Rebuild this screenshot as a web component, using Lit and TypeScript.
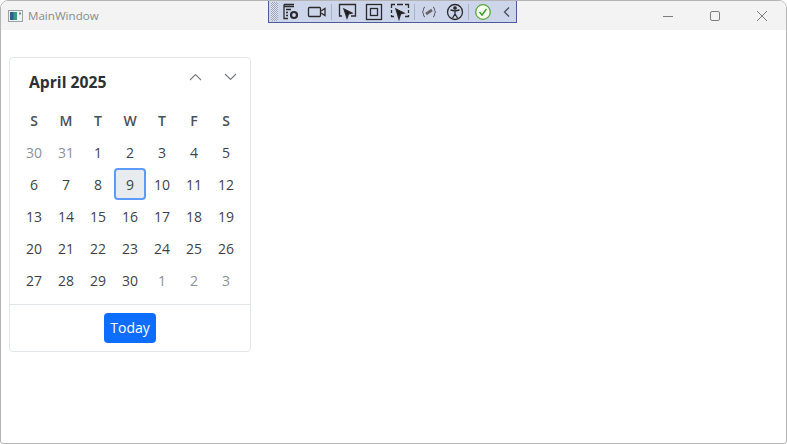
import { LitElement, html, css } from "lit";
import { customElement } from "lit/decorators.js";

const HEAD = ["S", "M", "T", "W", "T", "F", "S"];
const DAYS: [number, boolean][] = [
  [30, true], [31, true],
  ...Array.from({ length: 30 }, (_, i) => [i + 1, false] as [number, boolean]),
  [1, true], [2, true], [3, true],
];

@customElement("app-root")
export class AppRoot extends LitElement {
  static styles = css`
    :host { display: block; width: 787px; height: 444px; font-family: "Open Sans", "Noto Sans", sans-serif; background: #fff; overflow: hidden; }
    .window { position: relative; box-sizing: border-box; height: 444px; border: 1px solid #b4b4b4; border-radius: 8px 8px 3px 3px; background: #fff; overflow: hidden; display: flex; flex-direction: column; }
    .titlebar { height: 29px; flex: none; background: #f3f3f3; display: flex; align-items: center; padding-left: 7px; }
    .title { font-size: 11.6px; color: #8a8a8a; margin-left: 5px; }
    .app-icon { width: 15px; height: 12px; }
    .controls { margin-left: auto; margin-right: 1px; display: flex; }
    .ctl { width: 47px; height: 29px; display: flex; align-items: center; justify-content: center; }
    .ctl svg { width: 12px; height: 12px; stroke: #7d7d7d; fill: none; stroke-width: 1; }
    .content { padding: 27px 8px; }
    .card { box-sizing: border-box; width: 242px; height: 295px; border: 1px solid #e3e6e8; border-radius: 4px; display: flex; flex-direction: column; color: #343a40; }
    .head { height: 46px; flex: none; display: flex; align-items: center; padding: 1px 0 0 19px; box-sizing: border-box; }
    .month { font-size: 15.7px; font-weight: 700; color: #2b3035; }
    .navs { margin-left: auto; display: flex; gap: 22px; padding-right: 13px; margin-top: -9px; }
    .navs svg { width: 13px; height: 8px; stroke: #777c81; fill: none; stroke-width: 1.1; display: block; }
    .grid { display: grid; grid-template-columns: repeat(7, 32px); grid-auto-rows: 32px; padding: 0 8px; font-size: 14px; flex: none; }
    .c { display: flex; align-items: center; justify-content: center; box-sizing: border-box; color: #404347; }
    .h { font-weight: 600; color: #495057; }
    .mut { color: #8b9197; }
    .sel { background: #e9ecef; border: 2px solid #5a9cf8; border-radius: 4px; }
    .foot { margin-top: 8px; border-top: 1px solid #e3e6e8; flex: 1; display: flex; justify-content: center; padding-top: 8px; }
    .today { box-sizing: border-box; width: 52px; height: 30px; border-radius: 4px; background: #0d6efd; color: #fff; font-size: 14px; display: flex; align-items: center; justify-content: center; padding-bottom: 1px; }
    .toolbar { position: absolute; left: 267px; top: -1px; width: 249px; height: 23px; box-sizing: border-box; background: #cdd5ea; border: 1px solid #4a5a9c; display: flex; align-items: center; }
    .grip { width: 7px; height: 19px; margin-left: 2px; background-image: repeating-conic-gradient(#9aa1b8 0 25%, #e3e6f0 0 50%); background-size: 2px 2px; flex: none; }
    .toolbar svg { display: block; flex: none; position: absolute; top: 2px; width: 20px; height: 18px; fill: none; stroke: #2a2a2a; stroke-width: 1.3; }
    .sep { position: absolute; top: 3px; width: 1px; height: 16px; background: #a9b1c9; }
  `;

  render() {
    return html`
      <div class="window">
        <div class="titlebar">
          <svg class="app-icon" viewBox="0 0 15 12">
            <rect x="0.5" y="0.5" width="14" height="11" fill="#eef2f2" stroke="#9aa2a4"/>
            <rect x="2" y="2" width="7" height="8" fill="#3a9a86"/>
            <rect x="2" y="2" width="3.5" height="8" fill="#2a5f90"/>
            <rect x="11" y="2.500" width="2" height="2" fill="#6c8a8a"/>
          </svg>
          <span class="title">MainWindow</span>
          <div class="controls">
            <div class="ctl"><svg viewBox="0 0 12 12"><path d="M1 6.500h10"/></svg></div>
            <div class="ctl"><svg viewBox="0 0 12 12"><rect x="1.500" y="1.500" width="9" height="9" rx="1.500"/></svg></div>
            <div class="ctl"><svg viewBox="0 0 12 12"><path d="M1 1l10 10M11 1L1 11"/></svg></div>
          </div>
        </div>
        <div class="content">
          <div class="card">
            <div class="head">
              <span class="month">April 2025</span>
              <div class="navs">
                <svg viewBox="0 0 13 8"><path d="M1 7l5.500-5.500L12 7"/></svg>
                <svg viewBox="0 0 13 8"><path d="M1 1l5.500 5.500L12 1"/></svg>
              </div>
            </div>
            <div class="grid">
              ${HEAD.map((d) => html`<div class="c h">${d}</div>`)}
              ${DAYS.map(([n, m]) => html`<div class="c ${m ? "mut" : ""} ${!m && n === 9 ? "sel" : ""}">${n}</div>`)}
            </div>
            <div class="foot"><div class="today">Today</div></div>
          </div>
        </div>
        <div class="toolbar">
          <div class="grip"></div>
          <svg style="left:12px" viewBox="0 0 20 18"><path d="M3 1.500h10M3 3.500h10M3 1.500v14h4M5 6.500h5M5 9.500h2M5 12.500h2"/><circle cx="13" cy="12" r="3" stroke-width="2.200"/></svg>
          <svg style="left:38px" viewBox="0 0 20 18"><rect x="1.500" y="4.500" width="12" height="9" rx="1"/><path d="M14 8l4-2.500v7L14 10"/></svg>
          <div class="sep" style="left:62px"></div>
          <svg style="left:69px" viewBox="0 0 20 18"><path d="M4 13H1.500V1.500h16V13H13"/><path d="M6 6l8 4-3.500 1L9 15z" fill="#1c1c1c"/></svg>
          <svg style="left:95px" viewBox="0 0 20 18"><rect x="2.500" y="1.500" width="15" height="15"/><rect x="6.500" y="5.500" width="7" height="7"/></svg>
          <svg style="left:121px" viewBox="0 0 20 18"><path d="M1.500 5V1.500H5M7 1.500h6M15 1.500h3.500V5M18.500 7v3M18.500 12v1.500H15M1.500 7v3M1.500 12v1.500H4"/><path d="M6 6l8 4-3.500 1L9 16z" fill="#1c1c1c"/></svg>
          <div class="sep" style="left:145px"></div>
          <svg style="left:150px" viewBox="0 0 20 18"><path d="M6 4C4 4 5 8 3.500 9 5 10 4 14 6 14M14 4c2 0 1 4 2.500 5-1.500 1-.5 5-2.500 5" stroke-width="1" stroke="#555"/><path d="M7 11l6-4" stroke-width="2.800" stroke="#666"/></svg>
          <svg style="left:176px" viewBox="0 0 20 18"><circle cx="10" cy="9" r="7.500"/><circle cx="10" cy="5" r="1.200" fill="#2a2a2a"/><path d="M5.500 7l4.500 1 4.500-1M10 8v3l-2.500 4M10 11l2.500 4"/></svg>
          <div class="sep" style="left:199px"></div>
          <svg style="left:204px" viewBox="0 0 20 18"><circle cx="10" cy="9" r="7.300" fill="#f4fbf0" stroke="#5aa83a" stroke-width="1.300"/><path d="M6.500 9l2.500 3 4.500-6" stroke="#3e9a2c" stroke-width="1.400"/></svg>
          <svg style="left:228px" viewBox="0 0 20 18"><path d="M12 4.500L7.500 9l4.500 4.500" stroke="#45505f"/></svg>
        </div>
      </div>
    `;
  }
}
